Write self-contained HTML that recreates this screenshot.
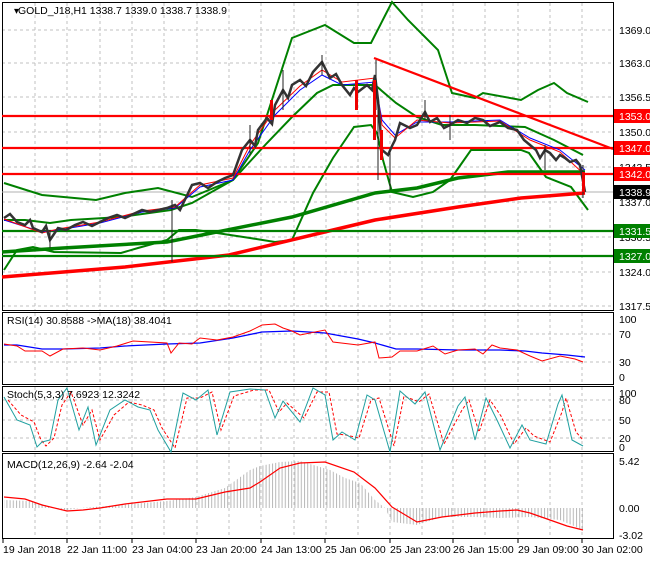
<!DOCTYPE html>
<html><head><meta charset="utf-8"><style>
body{margin:0;background:#fff;width:650px;height:560px;overflow:hidden;font-family:"Liberation Sans",sans-serif}
svg text{font-family:"Liberation Sans",sans-serif;font-size:10.5px;fill:#000}
</style></head><body>
<svg width="650" height="560" xmlns="http://www.w3.org/2000/svg">
<defs>
<pattern id="hb" width="3.2" height="10" patternUnits="userSpaceOnUse"><rect x="0" y="0" width="1" height="10" fill="#b8b8b8"/></pattern>
</defs>
<rect width="650" height="560" fill="#fff"/>
<g stroke="#c0c0c0" stroke-dasharray="3,3" stroke-width="1">
<path d="M35 3V310M67 3V310M100 3V310M132 3V310M164 3V310M197 3V310M229 3V310M261 3V310M294 3V310M326 3V310M358 3V310M390 3V310M422 3V310M453 3V310M485 3V310M518 3V310M550 3V310M582 3V310"/>
<path d="M2 30H613M2 63H613M2 97H613M2 132H613M2 167H613M2 202H613M2 237H613M2 272H613M2 306H613"/>
<path d="M35 313V384M67 313V384M100 313V384M132 313V384M164 313V384M197 313V384M229 313V384M261 313V384M294 313V384M326 313V384M358 313V384M390 313V384M422 313V384M453 313V384M485 313V384M518 313V384M550 313V384M582 313V384"/>
<path d="M2 334H613M2 362H613"/>
<path d="M35 387V451M67 387V451M100 387V451M132 387V451M164 387V451M197 387V451M229 387V451M261 387V451M294 387V451M326 387V451M358 387V451M390 387V451M422 387V451M453 387V451M485 387V451M518 387V451M550 387V451M582 387V451"/>
<path d="M2 400H613M2 420H613M2 438H613"/>
<path d="M35 454V538M67 454V538M100 454V538M132 454V538M164 454V538M197 454V538M229 454V538M261 454V538M294 454V538M326 454V538M358 454V538M390 454V538M422 454V538M453 454V538M485 454V538M518 454V538M550 454V538M582 454V538"/>
</g>
<g fill="none" stroke="#000" stroke-width="1">
<rect x="2.5" y="2.5" width="611" height="308"/>
<rect x="2.5" y="312.5" width="611" height="72"/>
<rect x="2.5" y="386.5" width="611" height="65"/>
<rect x="2.5" y="453.5" width="611" height="85"/>
</g>
<line x1="2" y1="192" x2="613" y2="192" stroke="#b0b0b0"/>
<g fill="none" stroke="#008000" stroke-width="2">
<polyline points="4,183 42,195 96,200 125,193 158,188 192,197 233,180 258,143 292,38 325,25 354,43 371,43 392,2 408,20 438,50 452,93 475,98 483,93 521,100 538,90 554,83 567,93 588,102"/>
<polyline points="4,220 25,220 50,223 71,220 121,217 171,210 192,203 233,180 267,143 292,117 317,93 333,85 358,85 375,85 396,103 417,117 442,125 475,125 525,127 554,140 583,155"/>
<polyline points="4,270 17,250 33,247 54,252 121,253 138,248 167,240 179,230 196,230 217,233 250,238 275,242 292,240 313,193 333,158 354,127 371,125 377,133 383,160 392,192 413,197 433,192 450,180 471,150 521,150 529,153 546,177 571,187 588,210"/>
<polyline stroke-width="3.5" points="2,252 63,248 167,242 292,217 375,193 417,188 458,178 508,172 585,172"/>
</g>
<polyline fill="none" stroke="#f00" stroke-width="3.5" points="2,277 125,267 229,255 333,230 375,220 458,207 521,198 585,193"/>
<g stroke="#f00" stroke-width="2.2"><path d="M2 116H613M2 148H613M2 174H613M374 58L613 149"/></g>
<g stroke="#008000" stroke-width="2.2"><path d="M2 231H613M2 256H613"/></g>
<polyline fill="none" stroke="#00f" stroke-width="1" points="4,220 42,232 58,230 100,223 142,212 175,208 200,187 233,180 250,150 275,115 300,90 322,75 342,85 375,82 382,120 395,135 417,122 450,122 500,120 530,138 560,150 585,170"/>
<polyline fill="none" stroke="#f00" stroke-width="1" points="4,219 42,233 58,229 100,222 142,211 175,207 200,185 233,178 250,145 275,110 300,86 322,70 342,82 375,78 382,125 395,138 417,120 450,123 500,121 530,140 560,152 585,175"/>
<polyline fill="none" stroke="#333" stroke-width="2.5" points="4,218 10,214 17,222 25,225 30,220 33,228 42,232 46,226 50,240 58,228 66,230 75,225 83,222 92,226 100,222 108,218 117,215 125,218 142,210 150,212 167,208 175,205 180,210 192,185 200,183 208,188 217,182 225,178 233,175 242,150 250,140 255,146 258,130 267,118 272,124 275,105 283,90 288,98 292,85 300,80 306,86 313,72 322,62 326,70 330,78 336,74 342,85 350,95 354,88 358,92 367,85 372,90 375,75 378,100 382,150 388,155 392,146 395,140 400,123 410,128 417,125 425,112 430,122 437,118 444,128 450,125 458,120 467,123 475,118 483,120 490,126 500,122 508,128 517,130 524,140 530,145 536,150 540,158 545,150 550,153 556,160 560,155 565,158 570,162 576,160 580,165 585,192"/>
<g stroke="#222" stroke-width="1"><path d="M50 248V230M172 262V200M322 55V75M376 60V110M378 180V100M390 190V150M450 140V115M545 170V145M583 198V165M283 70V110M250 125V155M425 100V120"/></g>
<g fill="#e00"><rect x="373" y="80" width="3" height="60"/><rect x="380" y="130" width="3" height="30"/><rect x="582" y="172" width="3" height="20"/><rect x="355" y="80" width="3" height="30"/><rect x="270" y="100" width="3" height="20"/></g>
<text x="14" y="14" style="font-size:10px">▾</text>
<text x="18" y="14">GOLD_J18,H1  1338.7 1339.0 1338.7 1338.9</text>
<g>
<text x="619" y="34">1369.0</text><text x="619" y="67">1363.0</text><text x="619" y="101">1356.5</text>
<text x="619" y="136">1350.0</text><text x="619" y="171">1343.5</text><text x="619" y="206">1337.0</text>
<text x="619" y="241">1330.5</text><text x="619" y="276">1324.0</text><text x="619" y="310">1317.5</text>
<rect x="614" y="109" width="36" height="14" fill="#f00"/><text x="619" y="120" style="fill:#fff">1353.0</text>
<rect x="614" y="141" width="36" height="14" fill="#f00"/><text x="619" y="152" style="fill:#fff">1347.0</text>
<rect x="614" y="167" width="36" height="14" fill="#f00"/><text x="619" y="178" style="fill:#fff">1342.0</text>
<rect x="614" y="185" width="36" height="14" fill="#000"/><text x="619" y="196" style="fill:#fff">1338.9</text>
<rect x="614" y="224" width="36" height="14" fill="#008000"/><text x="619" y="235" style="fill:#fff">1331.5</text>
<rect x="614" y="249" width="36" height="14" fill="#008000"/><text x="619" y="260" style="fill:#fff">1327.0</text>
</g>
<polyline fill="none" stroke="#00f" stroke-width="1.3" points="4,345 17,345 42,349 63,349 100,348 125,346 167,344 200,343 233,338 262,332 292,331 325,333 358,339 375,343 396,349 417,349 458,350 500,350 525,351 542,353 567,355 585,357"/>
<polyline fill="none" stroke="#f00" stroke-width="1" points="4,344 17,346 25,351 42,351 50,356 63,349 83,348 100,350 117,346 133,341 167,343 171,353 179,343 192,344 200,338 217,340 233,337 250,331 262,325 275,324 283,328 292,331 300,335 325,330 333,342 358,345 375,342 379,358 392,357 400,351 417,351 433,346 445,354 458,350 475,349 483,354 492,345 500,348 517,350 530,356 542,361 560,356 575,359 583,362"/>
<text x="7" y="324">RSI(14) 30.8588  -&gt;MA(18) 38.4041</text>
<text x="619" y="323">100</text><text x="619" y="338">70</text><text x="619" y="366">30</text><text x="619" y="381">0</text>
<polyline fill="none" stroke="#f00" stroke-width="1" stroke-dasharray="3,2" points="8,400 21,415 34,422 41,440 46,446 54,438 62,405 71,392 83,425 92,410 100,440 114,415 129,402 142,405 154,410 162,428 175,448 187,398 200,398 212,392 221,430 234,396 254,390 269,390 279,412 287,403 304,418 317,392 329,392 337,434 346,435 359,438 371,400 379,398 394,446 404,396 419,402 429,394 444,444 462,410 469,400 479,432 490,400 501,416 514,444 526,428 534,436 550,442 562,412 566,398 576,432 583,440"/>
<polyline fill="none" stroke="#20a0a0" stroke-width="1" points="4,397 17,420 30,425 37,447 42,442 50,440 58,400 67,388 79,430 88,407 96,445 110,410 125,400 138,407 150,410 158,430 171,452 183,393 196,400 208,390 217,435 230,392 250,389 265,390 275,418 283,401 300,422 313,388 325,395 333,440 342,432 355,440 367,395 375,400 390,452 400,391 415,404 425,392 440,450 458,406 465,397 475,440 486,398 497,420 510,448 522,425 530,440 546,444 558,404 562,395 572,440 583,446"/>
<text x="7" y="398">Stoch(5,3,3) 7.6923 12.3242</text>
<text x="619" y="397">100</text><text x="619" y="404">80</text><text x="619" y="424">50</text><text x="619" y="442">20</text><text x="619" y="451">0</text>
<polygon fill="url(#hb)" points="4,508 4,500 30,501 42,504 55,508 67,510 80,508 120,505 167,501 196,497 225,488 250,470 260,466 280,462 300,461 330,470 345,478 360,483 375,500 385,508 392,522 417,525 442,517 475,517 500,518 530,517 560,520 583,530 583,508"/>
<polyline fill="none" stroke="#f00" stroke-width="1.2" points="4,497 25,499 42,505 67,511 83,510 100,508 125,504 167,499 196,499 225,492 250,488 260,482 280,468 300,463 325,462 354,472 375,488 392,507 417,522 442,517 475,513 500,511 517,510 530,513 550,520 567,526 583,530"/>
<text x="7" y="468">MACD(12,26,9) -2.64 -2.04</text>
<text x="619" y="465">5.42</text><text x="619" y="512">0.00</text><text x="619" y="539">-3.02</text>
<g stroke="#000"><path d="M3 539v4M67 539v4M132 539v4M196 539v4M261 539v4M325 539v4M390 539v4M453 539v4M518 539v4M582 539v4"/></g>
<text x="3" y="553">19 Jan 2018</text><text x="67" y="553">22 Jan 11:00</text><text x="132" y="553">23 Jan 04:00</text>
<text x="196" y="553">23 Jan 20:00</text><text x="261" y="553">24 Jan 13:00</text><text x="325" y="553">25 Jan 06:00</text>
<text x="390" y="553">25 Jan 23:00</text><text x="453" y="553">26 Jan 15:00</text><text x="518" y="553">29 Jan 09:00</text>
<text x="582" y="553">30 Jan 02:00</text>
</svg>
</body></html>
